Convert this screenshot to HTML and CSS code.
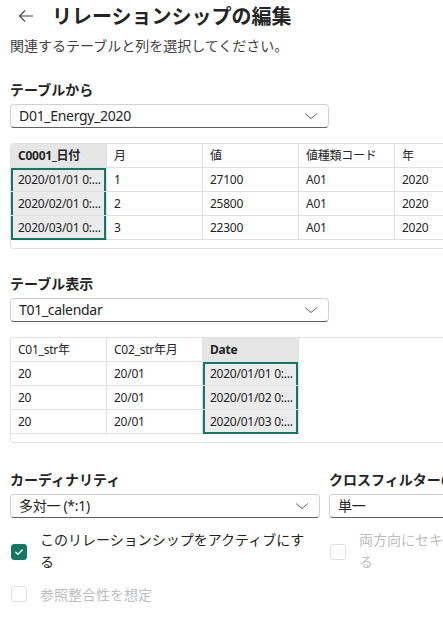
FILE: index.html
```html
<!DOCTYPE html>
<html lang="ja">
<head>
<meta charset="utf-8">
<title>リレーションシップの編集</title>
<link rel="stylesheet" href="styles.css">
</head>
<body>
<div class="page">
  <header class="header">
    <svg class="back" width="16" height="16" viewBox="0 0 16 16" aria-hidden="true">
      <path d="M15 8H1.5M7 2.5L1.5 8L7 13.5" fill="none" stroke="#424242" stroke-width="1.1"/>
    </svg>
    <h1 class="title">リレーションシップの編集</h1>
  </header>
  <p class="subtitle">関連するテーブルと列を選択してください。</p>

  <section class="section first">
    <div class="label">テーブルから</div>
    <div class="dropdown wide">
      <span class="value">D01_Energy_2020</span>
      <svg class="chev" width="14" height="8" viewBox="0 0 14 8"><path d="M1 1.5L7 6.5L13 1.5" fill="none" stroke="#616161" stroke-width="1"/></svg>
    </div>
    <div class="grid-wrap">
      <table class="grid five">
        <colgroup><col class="c"><col class="c"><col class="c"><col class="c"><col class="c"></colgroup>
        <tr>
          <th class="sel">C0001_日付</th><th>月</th><th>値</th><th>値種類コード</th><th>年</th>
        </tr>
        <tr>
          <td class="sel top">2020/01/01 0:...</td><td>1</td><td>27100</td><td>A01</td><td>2020</td>
        </tr>
        <tr>
          <td class="sel">2020/02/01 0:...</td><td>2</td><td>25800</td><td>A01</td><td>2020</td>
        </tr>
        <tr>
          <td class="sel bottom">2020/03/01 0:...</td><td>3</td><td>22300</td><td>A01</td><td>2020</td>
        </tr>
      </table>
    </div>
  </section>

  <section class="section second">
    <div class="label">テーブル表示</div>
    <div class="dropdown wide">
      <span class="value">T01_calendar</span>
      <svg class="chev" width="14" height="8" viewBox="0 0 14 8"><path d="M1 1.5L7 6.5L13 1.5" fill="none" stroke="#616161" stroke-width="1"/></svg>
    </div>
    <div class="grid-wrap">
      <table class="grid three">
        <colgroup><col class="c"><col class="c"><col class="c"></colgroup>
        <tr>
          <th>C01_str年</th><th>C02_str年月</th><th class="sel">Date</th>
        </tr>
        <tr>
          <td>20</td><td>20/01</td><td class="sel top">2020/01/01 0:...</td>
        </tr>
        <tr>
          <td>20</td><td>20/01</td><td class="sel">2020/01/02 0:...</td>
        </tr>
        <tr>
          <td>20</td><td>20/01</td><td class="sel bottom">2020/01/03 0:...</td>
        </tr>
      </table>
    </div>
  </section>

  <section class="options">
    <div class="field">
      <div class="label">カーディナリティ</div>
      <div class="dropdown">
        <span class="value">多対一 (*:1)</span>
        <svg class="chev" width="14" height="8" viewBox="0 0 14 8"><path d="M1 1.5L7 6.5L13 1.5" fill="none" stroke="#616161" stroke-width="1"/></svg>
      </div>
    </div>
    <div class="field">
      <div class="label">クロスフィルターの方向</div>
      <div class="dropdown">
        <span class="value">単一</span>
        <svg class="chev" width="14" height="8" viewBox="0 0 14 8"><path d="M1 1.5L7 6.5L13 1.5" fill="none" stroke="#616161" stroke-width="1"/></svg>
      </div>
    </div>
    <label class="check row1">
      <span class="box checked">
        <svg width="16" height="16" viewBox="0 0 16 16"><path d="M4.3 8.3L6.8 10.6L11.7 5.6" fill="none" stroke="#ffffff" stroke-width="1.6" stroke-linecap="round" stroke-linejoin="round"/></svg>
      </span>
      <span class="check-label">このリレーションシップをアクティブにする</span>
    </label>
    <label class="check row1 disabled">
      <span class="box"></span>
      <span class="check-label">両方向にセキュリティフィルターを適用する</span>
    </label>
    <label class="check row2 disabled">
      <span class="box"></span>
      <span class="check-label">参照整合性を想定</span>
    </label>
  </section>
</div>
</body>
</html>
```

FILE: styles.css
```css
html, body {
  margin: 0;
  padding: 0;
  overflow: hidden;
  background: #ffffff;
}

body {
  font-family: "Noto Sans", "Noto Sans CJK JP", sans-serif;
  color: #242424;
  font-size: 14px;
}

.page {
  width: 700px;
  padding-left: 10px;
  box-sizing: border-box;
}

.header {
  display: flex;
  align-items: center;
  height: 32px;
}

.back {
  margin-left: 8px;
  flex: none;
}

.title {
  margin: 0 0 0 18px;
  font-size: 20px;
  line-height: 32px;
  font-weight: 700;
  font-family: "Noto Sans CJK JP", sans-serif;
  color: #242424;
  white-space: nowrap;
}

.subtitle {
  margin: 3px 0 0;
  font-size: 14px;
  line-height: 20px;
  color: #424242;
  font-family: "Noto Sans CJK JP", sans-serif;
}

.section.first {
  margin-top: 24px;
}

.section.second {
  margin-top: 24px;
}

.label {
  font-size: 14px;
  line-height: 20px;
  font-weight: 700;
  font-family: "Noto Sans CJK JP", sans-serif;
  color: #242424;
  white-space: nowrap;
  margin-bottom: 5px;
}

.dropdown {
  display: flex;
  align-items: center;
  justify-content: space-between;
  height: 24px;
  box-sizing: border-box;
  border: 1px solid #d1d1d1;
  border-bottom-color: #616161;
  border-radius: 4px;
  padding: 0 10px 0 8px;
  background: #ffffff;
}

.dropdown.wide {
  width: 319px;
}

.value {
  font-size: 14px;
  line-height: 20px;
  letter-spacing: -0.3px;
  color: #242424;
  white-space: nowrap;
}

.chev {
  flex: none;
}

.grid-wrap {
  margin-top: 15px;
  width: 630px;
  height: 106px;
  box-sizing: border-box;
  border: 1px solid #e0e0e0;
  border-radius: 4px;
  overflow: hidden;
}

.grid {
  border-collapse: separate;
  border-spacing: 0;
  table-layout: fixed;
}

.grid.five {
  width: 480px;
}

.grid.three {
  width: 288px;
}

.grid col.c {
  width: 96px;
}

.grid th,
.grid td {
  padding: 0 4px 0 7px;
  height: 23px;
  line-height: 23px;
  font-size: 12px;
  letter-spacing: -0.25px;
  text-align: left;
  white-space: nowrap;
  overflow: hidden;
  text-overflow: clip;
  border-right: 1px solid #e0e0e0;
  border-bottom: 1px solid #e0e0e0;
  color: #242424;
  font-weight: 400;
  vertical-align: middle;
}

.grid th.sel {
  background: #e6e6e6;
  font-weight: 700;
}

.grid td.sel {
  background: #ebebeb;
  box-shadow: inset 2px 0 0 #117865, inset -2px 0 0 #117865;
}

.grid td.sel.top {
  box-shadow: inset 2px 0 0 #117865, inset -2px 0 0 #117865, inset 0 2px 0 #117865;
}

.grid td.sel.bottom {
  border-bottom-color: #117865;
  box-shadow: inset 2px 0 0 #117865, inset -2px 0 0 #117865, inset 0 -1px 0 #117865;
}

.options {
  margin-top: 26px;
  display: grid;
  grid-template-columns: 310px 310px;
  column-gap: 9px;
  align-items: start;
}

.check {
  display: flex;
  align-items: center;
  padding-left: 1px;
}

.check.row1 {
  margin-top: 10px;
}

.check.row2 {
  margin-top: 11px;
}

.box {
  flex: none;
  width: 16px;
  height: 16px;
  box-sizing: border-box;
  border: 1px solid #e0e0e0;
  border-radius: 3px;
  display: flex;
  align-items: center;
  justify-content: center;
}

.check.row1 .box {
  margin-top: 4px;
}

.box.checked {
  background: #117865;
  border-color: #117865;
}

.box svg {
  display: block;
}

.check-label {
  margin-left: 13px;
  max-width: 272px;
  font-size: 14px;
  line-height: 22px;
  font-family: "Noto Sans CJK JP", sans-serif;
  color: #242424;
}

.check.disabled .check-label {
  color: #bdbdbd;
}
```
